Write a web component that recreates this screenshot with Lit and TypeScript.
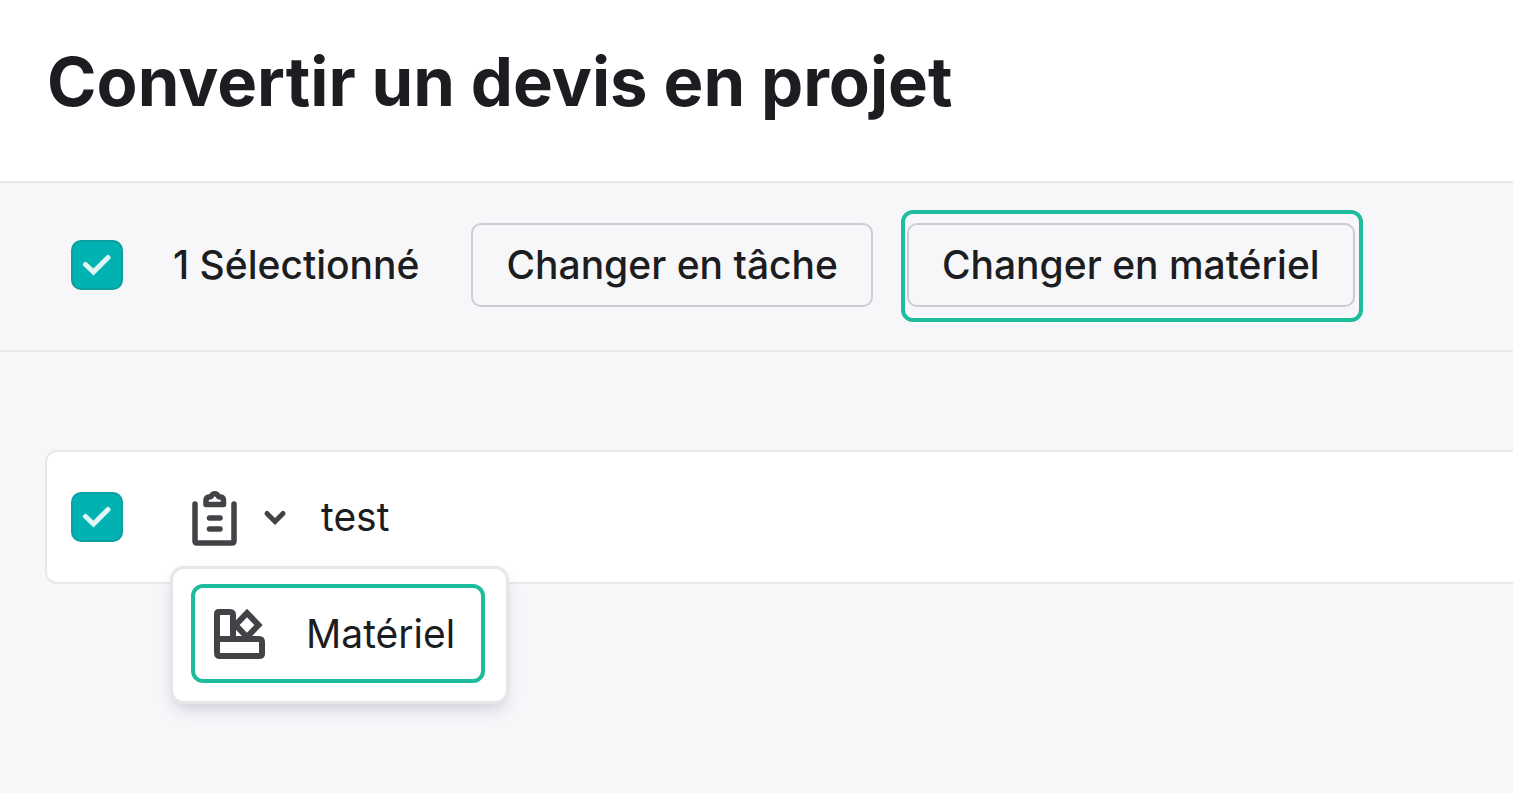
import { LitElement, html, css, svg } from "lit";
import { customElement, property, state } from "lit/decorators.js";

const clipboardIcon = svg`
  <svg class="icon" width="64" height="64" viewBox="0 0 64 64" fill="none" stroke="currentColor"
    stroke-width="5.500" stroke-linecap="round" stroke-linejoin="round" aria-hidden="true">
    <path d="M12 19V56Q12 58 14 58H49Q51 58 51 56V19" />
    <path d="M23 19.500V15C23 13 24.500 12 26.500 12C28 12 28.300 11.300 28.700 10.500C30 8 33.500 8 34.800 10.500C35.200 11.300 35.500 12 37 12C39 12 40.500 13 40.500 15V19.500Z" />
    <path d="M26.500 33H37M26.500 44H37" />
  </svg>`;

const chevronIcon = svg`
  <svg width="24" height="24" viewBox="0 0 24 24" fill="none" stroke="currentColor"
    stroke-width="5" stroke-linecap="round" aria-hidden="true">
    <path d="M4 8.500L12 16.500L20 8.500" />
  </svg>`;

const materialIcon = svg`
  <svg class="icon" width="52" height="52" viewBox="0 0 52 52" fill="none" stroke="currentColor"
    stroke-width="6" stroke-linejoin="round" aria-hidden="true">
    <path d="M4 31V6Q4 4 6 4H17Q20 4 20 7V31" />
    <path d="M4 31H46Q49 31 49 34V46Q49 48 46 48H7Q4 48 4 45Z" />
    <path d="M34 5L45.500 17L34 29L22.500 17Z" stroke-linejoin="miter" />
  </svg>`;

@customElement("check-box")
export class CheckBox extends LitElement {
  @property() label = "";
  @property({ type: Boolean }) checked = false;

  static styles = css`
    :host {
      display: block;
      flex: none;
    }
    .box {
      display: grid;
      place-items: center;
      width: 52px;
      height: 52px;
    }
    .input,
    .tick {
      grid-area: 1 / 1;
    }
    .input {
      appearance: none;
      box-sizing: border-box;
      width: 52px;
      height: 50px;
      margin: 0;
      border: 2px solid #c9c9ce;
      border-radius: 10px;
      background: #fff;
    }
    .input:checked {
      border-color: #0d9f9f;
      background: #00b2b2;
    }
    .tick {
      pointer-events: none;
      visibility: hidden;
    }
    .input:checked + .tick {
      visibility: visible;
    }
  `;

  render() {
    return html`
      <label class="box">
        <input
          class="input"
          type="checkbox"
          aria-label=${this.label}
          .checked=${this.checked}
          @change=${(e: Event) => (this.checked = (e.target as HTMLInputElement).checked)}
        />
        <svg class="tick" width="32" height="32" viewBox="0 0 32 32" fill="none"
          stroke="#e0f5f4" stroke-width="5" stroke-linecap="round" aria-hidden="true">
          <path d="M4.500 15.500L12.500 23L27 8.500" />
        </svg>
      </label>
    `;
  }
}

@customElement("app-root")
export class AppRoot extends LitElement {
  @state() private menuOpen = true;

  static styles = css`
    :host {
      display: block;
      min-height: 100vh;
      overflow: hidden;
      background: #f7f7fa;
      color: #1c1d21;
      font-family: Inter, "Liberation Sans", sans-serif;
      font-size: 39px;
      line-height: 48px;
    }
    .header {
      padding: 40px 47px 57px;
      border-bottom: 2px solid #e9e9eb;
      background: #fff;
    }
    .title {
      margin: 0;
      font-size: 67px;
      font-weight: 700;
      line-height: 84px;
    }
    .toolbar {
      display: flex;
      align-items: center;
      padding: 40px 71px 43px;
      border-bottom: 2px solid #e9e9eb;
      font-weight: 500;
    }
    .count {
      margin: 0 52px 0 50px;
      white-space: nowrap;
    }
    .actions {
      display: flex;
      gap: 34px;
    }
    .action {
      box-sizing: border-box;
      height: 84px;
      padding: 0 33px;
      border: 2px solid #cdcdd1;
      border-radius: 10px;
      background: transparent;
      color: inherit;
      font: inherit;
      white-space: nowrap;
    }
    .marked {
      position: relative;
    }
    .marked::after {
      content: "";
      position: absolute;
      inset: -13px -8px -15px -6px;
      border: 4px solid #1dbc9c;
      border-radius: 12px;
      pointer-events: none;
    }
    .list {
      margin: 98px 0 0 45px;
    }
    .row {
      display: flex;
      align-items: center;
      box-sizing: border-box;
      height: 134px;
      margin-right: -12px;
      padding: 0 24px;
      border: 2px solid #e8e8ea;
      border-radius: 12px;
      background: #fff;
    }
    .kind {
      position: relative;
      margin: 0 34px 0 60px;
    }
    .kind-button {
      display: flex;
      align-items: center;
      gap: 16px;
      padding: 0;
      border: 0;
      background: none;
      color: #424347;
    }
    .icon {
      display: block;
      flex: none;
    }
    .menu {
      position: absolute;
      top: 81px;
      left: -13px;
      z-index: 1;
      padding: 15px 21px 18px 18px;
      border: 3px solid #e6e6e8;
      border-radius: 14px;
      background: #fff;
      box-shadow: 0 8px 16px -4px rgba(40, 40, 90, 0.22);
    }
    .menu-item {
      display: flex;
      align-items: center;
      gap: 41px;
      box-sizing: border-box;
      height: 99px;
      padding: 0 26px 0 18px;
      border: 4px solid #1dbc9c;
      border-radius: 12px;
      background: #fff;
      color: #424347;
      font: inherit;
    }
    .text {
      color: #1c1d21;
    }
  `;

  render() {
    return html`
      <header class="header">
        <h1 class="title">Convertir un devis en projet</h1>
      </header>
      <section class="toolbar">
        <check-box label="Tout sélectionner" checked></check-box>
        <span class="count">1 Sélectionné</span>
        <div class="actions">
          <button class="action" type="button">Changer en tâche</button>
          <div class="marked">
            <button class="action" type="button">Changer en matériel</button>
          </div>
        </div>
      </section>
      <main class="list">
        <div class="row">
          <check-box label="test" checked></check-box>
          <div class="kind">
            <button
              class="kind-button"
              type="button"
              aria-label="Type"
              aria-expanded=${this.menuOpen}
              @click=${() => (this.menuOpen = !this.menuOpen)}
            >
              ${clipboardIcon}${chevronIcon}
            </button>
            ${this.menuOpen
              ? html`<div class="menu">
                  <button class="menu-item" type="button">
                    ${materialIcon}<span class="text">Matériel</span>
                  </button>
                </div>`
              : null}
          </div>
          <span class="text">test</span>
        </div>
      </main>
    `;
  }
}
